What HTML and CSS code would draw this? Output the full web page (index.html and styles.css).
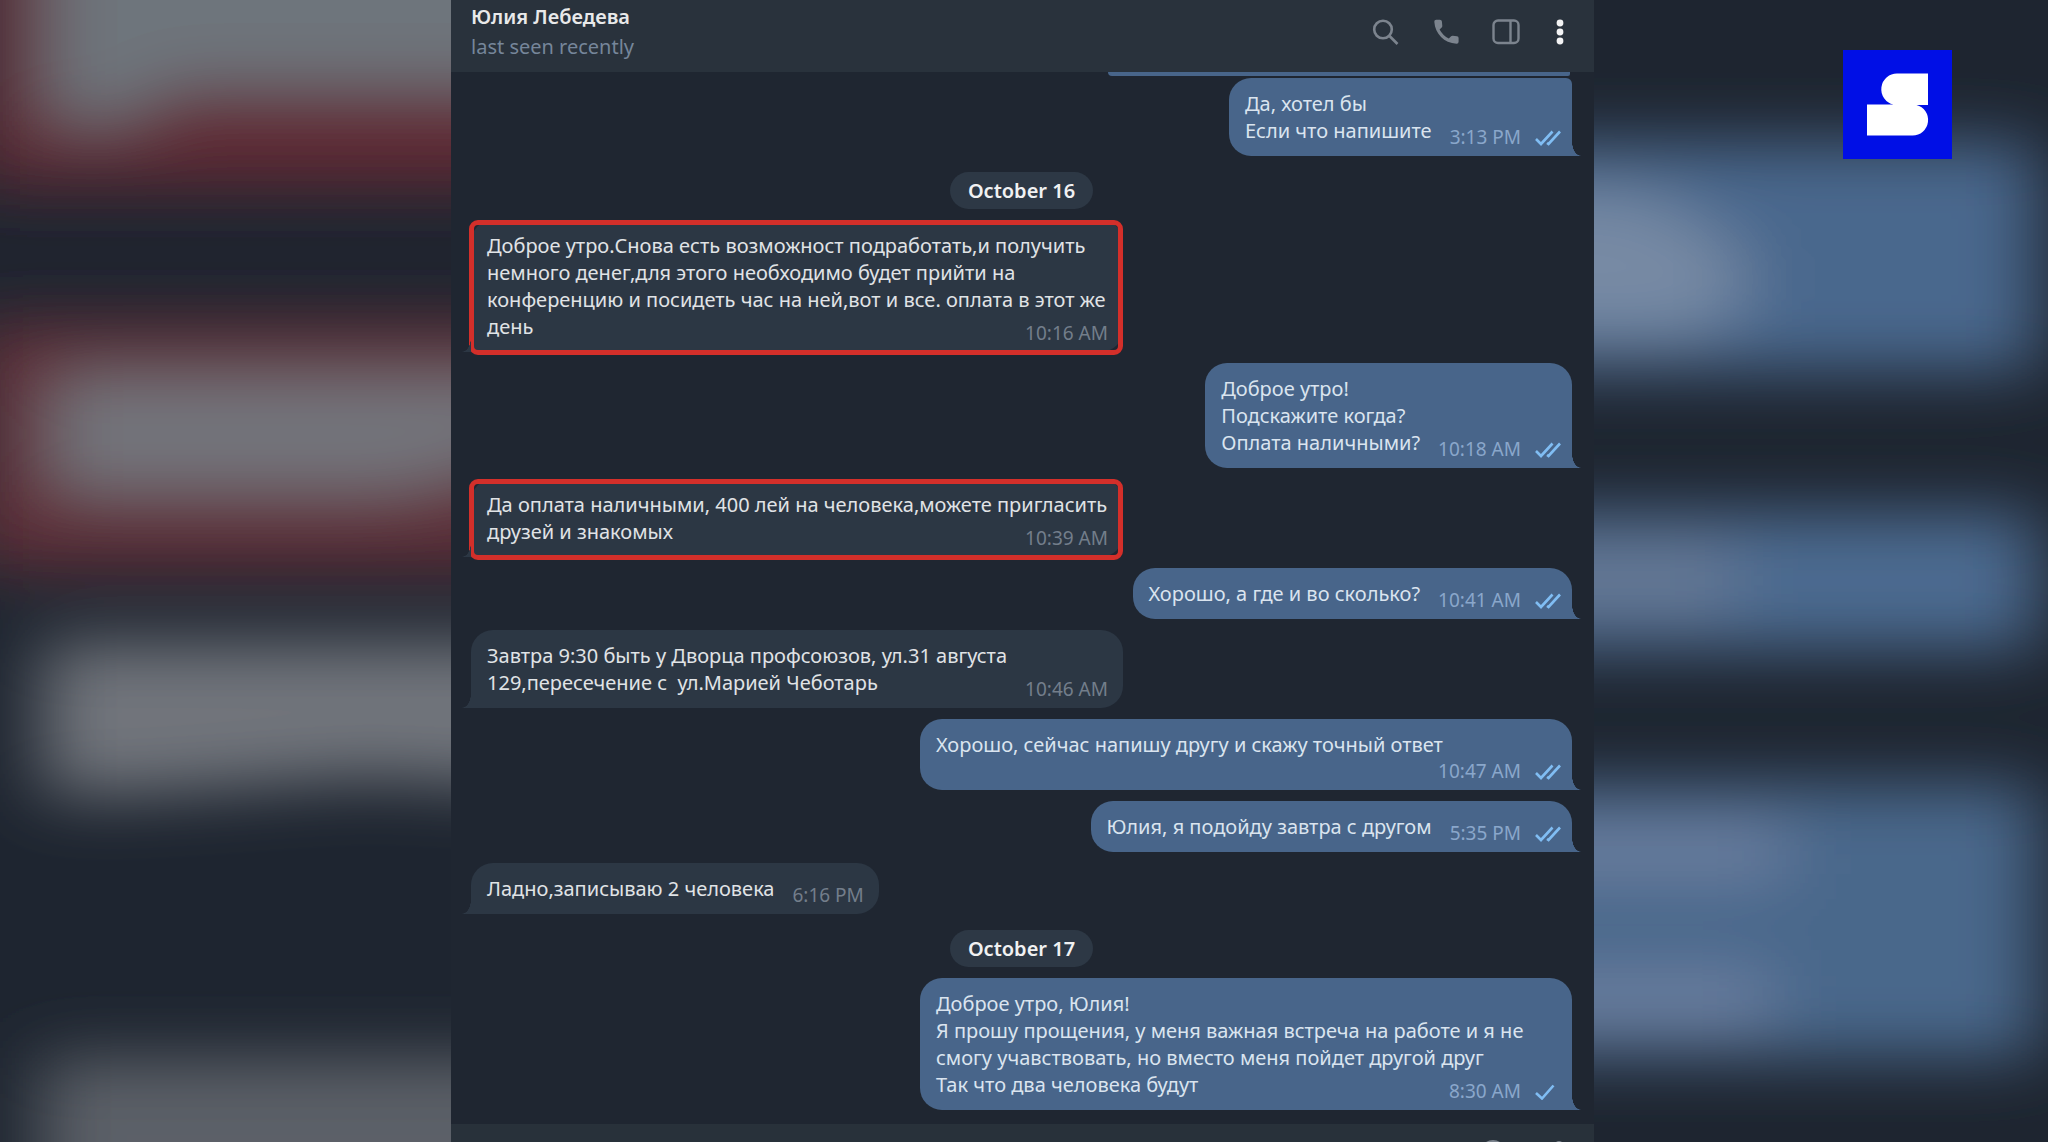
FILE: index.html
```html
<!DOCTYPE html>
<html lang="ru">
<head>
<meta charset="utf-8">
<meta name="viewport" content="width=device-width, initial-scale=1">
<title>Юлия Лебедева</title>
<link rel="stylesheet" href="styles.css">
</head>
<body>
<svg class="symbols" aria-hidden="true">
  <symbol id="read" viewBox="0 0 26 16"><path d="M1 9l5 5L17.500 1.500M12 13l1.500 1L25 1.500"/></symbol>
  <symbol id="sent" viewBox="0 0 26 16"><path d="M1 9l6 5.500L18.500 1.500"/></symbol>
</svg>
<div class="stage">
  <div class="side">
    <svg class="haze" viewBox="0 0 451 1142" preserveAspectRatio="none" aria-hidden="true">
      <defs><filter id="soft" filterUnits="userSpaceOnUse" x="-400" y="-200" width="1300" height="1600"><feGaussianBlur stdDeviation="36 32"/></filter></defs>
      <g filter="url(#soft)">
        <path fill="#602b36" d="M-28-100H600V188H-28z"/>
        <path fill="#6e757c" d="M44-100H600V88H170L130 122H44z"/>
        <path fill="#602d38" d="M-28 320H600V570H-28z"/>
        <path fill="#73757b" d="M50 376H600V440L400 492H50z"/>
        <path fill="#71757b" d="M42 642H600V792L370 778L130 795H42z"/>
        <path fill="#5b6068" d="M40 1058H600V1300H40z"/>
      </g>
    </svg>
  </div>

  <main class="chat">
    <header class="chat-header">
      <div class="peer">
        <h1 class="peer-name">Юлия Лебедева</h1>
        <p class="peer-status">last seen recently</p>
      </div>
      <div class="actions">
        <button class="action" aria-label="Search"><svg width="28" height="28" viewBox="0 0 28 28"><g fill="none" stroke="currentColor" stroke-width="2.600"><circle cx="11" cy="11.500" r="8.800"/><path d="M17.500 18L25.500 26"/></g></svg></button>
        <button class="action" aria-label="Call"><svg width="28" height="28" viewBox="0 0 28 28"><path fill="currentColor" d="M4.200 1.800h3.700q1.900 0 2 1.700l.4 4.200q.1 1-.6 1.700L7.600 11.400q3.300 6.100 9.200 9.200l2.300-2.300q.7-.7 1.700-.6l4.200.6q1.600.1 1.600 1.800v3.700q0 2.100-2.100 2C12 25 3.200 16 2.300 3.800Q2.200 1.900 4.200 1.800z"/></svg></button>
        <button class="action" aria-label="Info panel"><svg width="28" height="28" viewBox="0 0 28 28"><g fill="none" stroke="currentColor" stroke-width="2.400"><rect x="1.500" y="2.500" width="25" height="22.500" rx="4.500"/><path d="M18.500 2.500V25"/></g></svg></button>
        <button class="action action--menu" aria-label="Menu"><svg width="8" height="28" viewBox="0 0 8 28"><g fill="currentColor"><circle cx="4" cy="5" r="3.400"/><circle cx="4" cy="14" r="3.400"/><circle cx="4" cy="23" r="3.400"/></g></svg></button>
      </div>
    </header>

    <section class="messages">
      <div class="bubble-end"></div>
      <article class="bubble out joined"><p>Да, хотел бы<br>Если что напишите</p><span class="meta">3:13 PM<svg class="ticks"><use href="#read"/></svg></span></article>
      <time class="day">October 16</time>
      <article class="bubble in wide marked"><p>Доброе утро.Снова есть возможност подработать,и получить немного денег,для этого необходимо будет прийти на конференцию и посидеть час на ней,вот и все. оплата в этот же день</p><span class="meta">10:16 AM</span></article>
      <article class="bubble out"><p>Доброе утро!<br>Подскажите когда?<br>Оплата наличными?</p><span class="meta">10:18 AM<svg class="ticks"><use href="#read"/></svg></span></article>
      <article class="bubble in wide marked"><p>Да оплата наличными, 400 лей на человека,можете пригласить друзей и знакомых</p><span class="meta">10:39 AM</span></article>
      <article class="bubble out"><p>Хорошо, а где и во сколько?</p><span class="meta">10:41 AM<svg class="ticks"><use href="#read"/></svg></span></article>
      <article class="bubble in wide"><p>Завтра 9:30 быть у Дворца профсоюзов, ул.31 августа 129,пересечение с &nbsp;ул.Марией Чеботарь</p><span class="meta">10:46 AM</span></article>
      <article class="bubble out wide tall"><p>Хорошо, сейчас напишу другу и скажу точный ответ</p><span class="meta">10:47 AM<svg class="ticks"><use href="#read"/></svg></span></article>
      <article class="bubble out"><p>Юлия, я подойду завтра с другом</p><span class="meta">5:35 PM<svg class="ticks"><use href="#read"/></svg></span></article>
      <article class="bubble in"><p>Ладно,записываю 2 человека</p><span class="meta">6:16 PM</span></article>
      <time class="day">October 17</time>
      <article class="bubble out wide"><p>Доброе утро, Юлия!<br>Я прошу прощения, у меня важная встреча на работе и я не смогу учавствовать, но вместо меня пойдет другой друг<br>Так что два человека будут</p><span class="meta">8:30 AM<svg class="ticks"><use href="#sent"/></svg></span></article>
    </section>

    <footer class="composer">
      <svg width="28" height="28" viewBox="0 0 28 28" aria-hidden="true"><circle cx="14" cy="14" r="12" fill="none" stroke="currentColor" stroke-width="2"/></svg>
      <svg width="28" height="28" viewBox="0 0 28 28" aria-hidden="true"><rect x="9" y="2" width="10" height="17" rx="5" fill="currentColor"/></svg>
    </footer>
  </main>

  <div class="side">
    <svg class="haze" viewBox="0 0 454 1142" preserveAspectRatio="none" aria-hidden="true">
      <g filter="url(#soft)">
        <path fill="#4a678d" d="M-200 142H444V372H-200z"/>
        <path fill="#778aa4" d="M-200 180L60 195L150 255V310L90 336H-200z"/>
        <path fill="#4c6a90" d="M-200 512H444V650H-200z"/>
        <path fill="#687994" d="M-200 545H140V612H-200z"/>
        <path fill="#4a678b" d="M-200 784H444V1058H-200z"/>
        <path fill="#6d80a0" d="M-200 824H190V878H-200zM-200 972H175V1028H-200z"/>
      </g>
    </svg>
    <svg class="logo" viewBox="0 0 109 109" role="img" aria-label="S"><path fill="#000fe6" d="M0 0H109V109H0z"/><path fill="#fff" d="M85 23.500H54.500a15.700 15.700 0 0 0-4 31H24v31H69.500a15.500 15.500 0 0 0 4-30.500H85z"/></svg>
  </div>
</div>
</body>
</html>
```
FILE: styles.css
```css
* { box-sizing: border-box; }

body {
  margin: 0;
  overflow: hidden;
  background: #1e2530;
  color: #e0e3e6;
  font: 20px/27px "Noto Sans", "Open Sans", sans-serif;
}

h1, p { margin: 0; }

.symbols { display: none; }

.stage {
  display: grid;
  grid-template-columns: 451fr 1143fr 454fr;
  height: 100vh;
}

.side {
  position: relative;
  overflow: hidden;
}

.haze {
  display: block;
  width: 100%;
  height: 100%;
}

.logo {
  position: absolute;
  top: 50px;
  right: 96px;
  width: 109px;
}

.chat {
  display: flex;
  flex-direction: column;
  min-width: 0;
  overflow: hidden;
  background: #1f2631;
}

.chat-header {
  display: flex;
  justify-content: space-between;
  flex: none;
  height: 72px;
  padding: 0 30px 0 20px;
  background: #29323c;
}

.peer { padding-top: 2px; }

.peer-name,
.peer-status {
  font-size: 20px;
  line-height: 30px;
}

.peer-name {
  font-weight: 600;
  color: #e8e9ea;
}

.peer-status { color: #76869a; }

.actions {
  display: flex;
  align-items: flex-start;
  gap: 32px;
  padding-top: 18px;
}

.action {
  display: block;
  padding: 0;
  border: 0;
  background: none;
  color: #7c848e;
}

.action svg { display: block; }

.action--menu {
  margin-left: 4px;
  color: #f2f3f4;
}

.messages {
  display: flex;
  flex-direction: column;
  align-items: flex-start;
  gap: 11px;
  flex: none;
  padding: 0 22px 14px 20px;
}

.bubble-end {
  align-self: flex-end;
  width: 462px;
  height: 4px;
  margin: 0 2px -9px 0;
  border-radius: 0 0 6px 12px;
  background: #48658a;
}

.bubble {
  position: relative;
  display: flex;
  align-items: flex-end;
  gap: 18px;
  padding: 12px 11px 12px 16px;
  border-radius: 22px;
}

.in {
  background: #2c3744;
  border-bottom-left-radius: 0;
}

.out {
  align-self: flex-end;
  background: #48658a;
  border-bottom-right-radius: 0;
  color: #dae4ef;
}

.joined { border-top-right-radius: 6px; }

/* message tail */
.bubble::after {
  content: "";
  position: absolute;
  bottom: 0;
  width: 9px;
  height: 14px;
}

.in::after {
  right: 100%;
  background: radial-gradient(9px 14px at 0 0, transparent 96%, #2c3744 100%);
}

.out::after {
  left: 100%;
  background: radial-gradient(9px 14px at 100% 0, transparent 96%, #48658a 100%);
}

/* full-width messages share one cell between text and time */
.wide {
  display: grid;
  width: 652px;
  max-width: 100%;
}

.wide > * { grid-area: 1 / 1; }

.wide .meta {
  align-self: end;
  justify-self: end;
}

.tall { padding-bottom: 32px; }
.tall .meta { margin-bottom: -27px; }

.marked::before {
  content: "";
  position: absolute;
  inset: 0 0 -3px -2px;
  border: 5px solid #d32f2a;
  border-radius: 9px;
}

.meta {
  display: flex;
  align-items: center;
  gap: 14px;
  margin-bottom: -7px;
  font-size: 19px;
  white-space: nowrap;
  color: #737e8b;
}

.in .meta { margin-right: 4px; }
.out .meta { color: #8aa7cb; }

.ticks {
  width: 26px;
  height: 16px;
  fill: none;
  stroke: #80bdf3;
  stroke-width: 2.600;
}

.day {
  align-self: center;
  margin-top: 5px;
  padding: 5px 18px;
  border-radius: 19px;
  background: #2d3845;
  color: #f0f1f2;
  font-weight: 600;
}

.composer {
  display: flex;
  justify-content: flex-end;
  flex: 1 0 60px;
  gap: 38px;
  padding: 15px 21px;
  background: #28313a;
  color: #7c848e;
}
```
